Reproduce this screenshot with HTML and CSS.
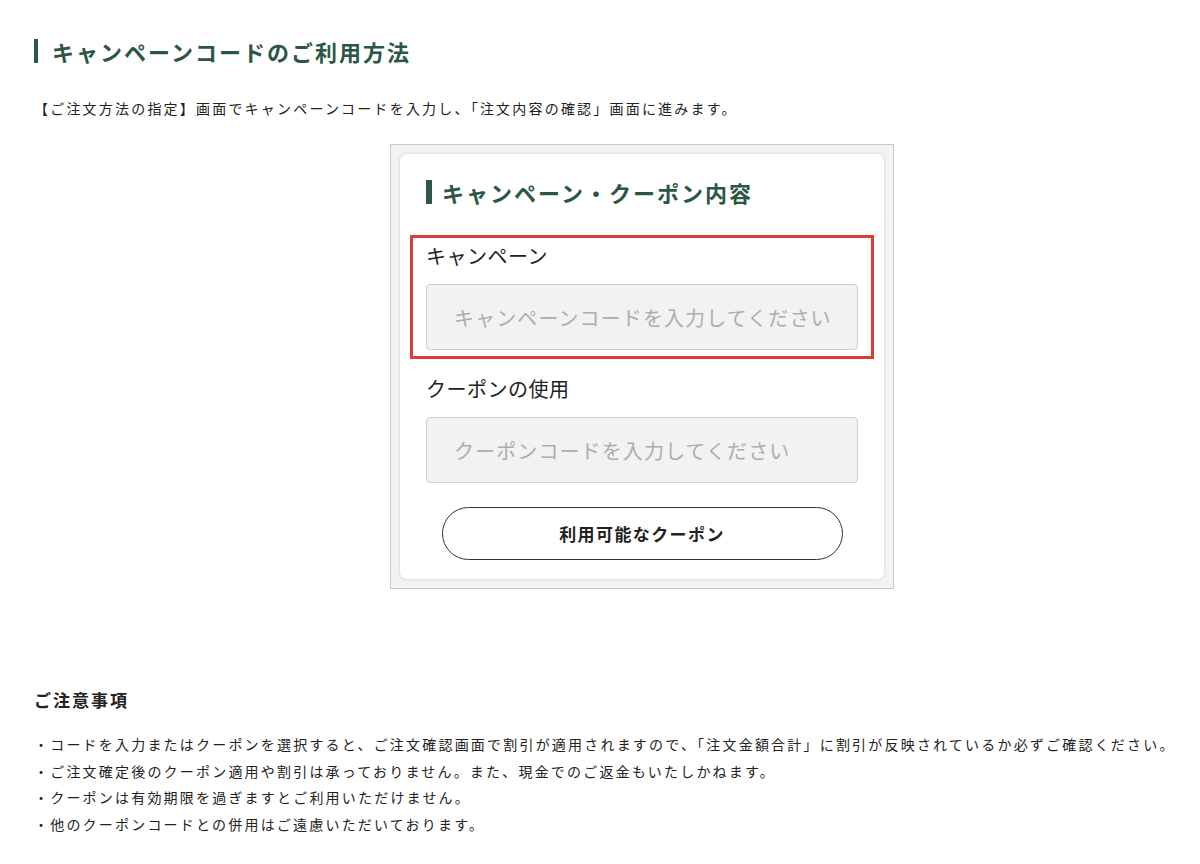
FILE: index.html
```html
<!DOCTYPE html>
<html lang="ja">
<head>
  <meta charset="UTF-8" />
  <meta name="viewport" content="width=device-width, initial-scale=1.0">
  <title>キャンペーンコードのご利用方法</title>
  <link rel="stylesheet" href="styles.css">
</head>
<body>

  <section class="guide">
    <h2 class="guide-title">キャンペーンコードのご利用方法</h2>
    <p class="guide-lead">【ご注文方法の指定】画面でキャンペーンコードを入力し、「注文内容の確認」画面に進みます。</p>

    <!-- 入力画面のイメージ -->
    <div class="shot">
      <div class="shot-card">
        <h3 class="shot-title">キャンペーン・クーポン内容</h3>

        <div class="field field-mark">
          <label class="field-label">キャンペーン</label>
          <input class="field-input" type="text" placeholder="キャンペーンコードを入力してください">
        </div>

        <div class="field">
          <label class="field-label">クーポンの使用</label>
          <input class="field-input" type="text" placeholder="クーポンコードを入力してください">
        </div>

        <button class="coupon-btn" type="button">利用可能なクーポン</button>
      </div>
    </div>
  </section>

  <section class="notes">
    <h4 class="notes-title">ご注意事項</h4>
    <ul class="notes-list">
      <li>・コードを入力またはクーポンを選択すると、ご注文確認画面で割引が適用されますので、「注文金額合計」に割引が反映されているか必ずご確認ください。</li>
      <li>・ご注文確定後のクーポン適用や割引は承っておりません。また、現金でのご返金もいたしかねます。</li>
      <li>・クーポンは有効期限を過ぎますとご利用いただけません。</li>
      <li>・他のクーポンコードとの併用はご遠慮いただいております。</li>
    </ul>
  </section>

</body>
</html>
```

FILE: styles.css
```css
body {
  margin: 0;
  padding: 0 10px 0 34px;
  font-family: "Noto Sans CJK JP", "Noto Sans", sans-serif;
  color: #222;
  background: #fff;
}

.guide-title {
  margin: 39px 0 0;
  padding-left: 14px;
  border-left: 4px solid #2b5744;
  font-size: 22px;
  line-height: 24px;
  letter-spacing: 2px;
  font-weight: bold;
  color: #2b5744;
}

.guide-lead {
  margin: 34px 0 0;
  font-size: 14px;
  line-height: 22px;
  letter-spacing: 2.2px;
  color: #222;
}

/* スマホ画面の切り抜き */
.shot {
  width: 486px;
  margin: 25px 0 0 356px;
  padding: 8px;
  border: 1px solid #c8c8c8;
  background: #f3f3f3;
}

.shot-card {
  background: #fff;
  border: 1px solid #e6e6e6;
  border-radius: 8px;
  box-shadow: 0 0 3px rgba(0,0,0,0.08);
  padding: 26px 10px 19px;
}

.shot-title {
  margin: 0 0 31px 16px;
  padding-left: 10px;
  border-left: 6px solid #2b5744;
  font-size: 22px;
  line-height: 24px;
  letter-spacing: 2px;
  font-weight: bold;
  color: #2b5744;
}

.field {
  display: flex;
  flex-direction: column;
  padding: 0 16px;
}

.field-mark {
  border: 3px solid #e03c33;
  padding: 4px 13px 6px;
  margin-bottom: 16px;
}

.field-label {
  font-size: 20px;
  line-height: 28px;
  letter-spacing: 0.5px;
  color: #222;
  margin-bottom: 14px;
}

.field-input {
  height: 66px;
  box-sizing: border-box;
  background: #f2f2f2;
  border: 1.5px solid #cfcfcf;
  border-radius: 4px;
  padding: 0 27px;
  font-family: inherit;
  font-size: 20px;
  letter-spacing: 1.1px;
}

.field-input::placeholder {
  color: #adadad;
}

.coupon-btn {
  display: block;
  width: 401px;
  height: 53px;
  margin: 24px auto 0;
  background: #fff;
  border: 1.5px solid #333;
  border-radius: 27px;
  font-family: inherit;
  font-size: 17px;
  font-weight: bold;
  letter-spacing: 1.4px;
  color: #222;
  cursor: pointer;
}

.notes {
  margin-top: 99px;
}

.notes-title {
  margin: 0;
  font-size: 17px;
  line-height: 24px;
  letter-spacing: 2px;
  font-weight: bold;
}

.notes-list {
  list-style: none;
  margin: 19px 0 0;
  padding: 0;
  font-size: 14px;
  line-height: 26.5px;
  letter-spacing: 2.2px;
  white-space: nowrap;
}
```
